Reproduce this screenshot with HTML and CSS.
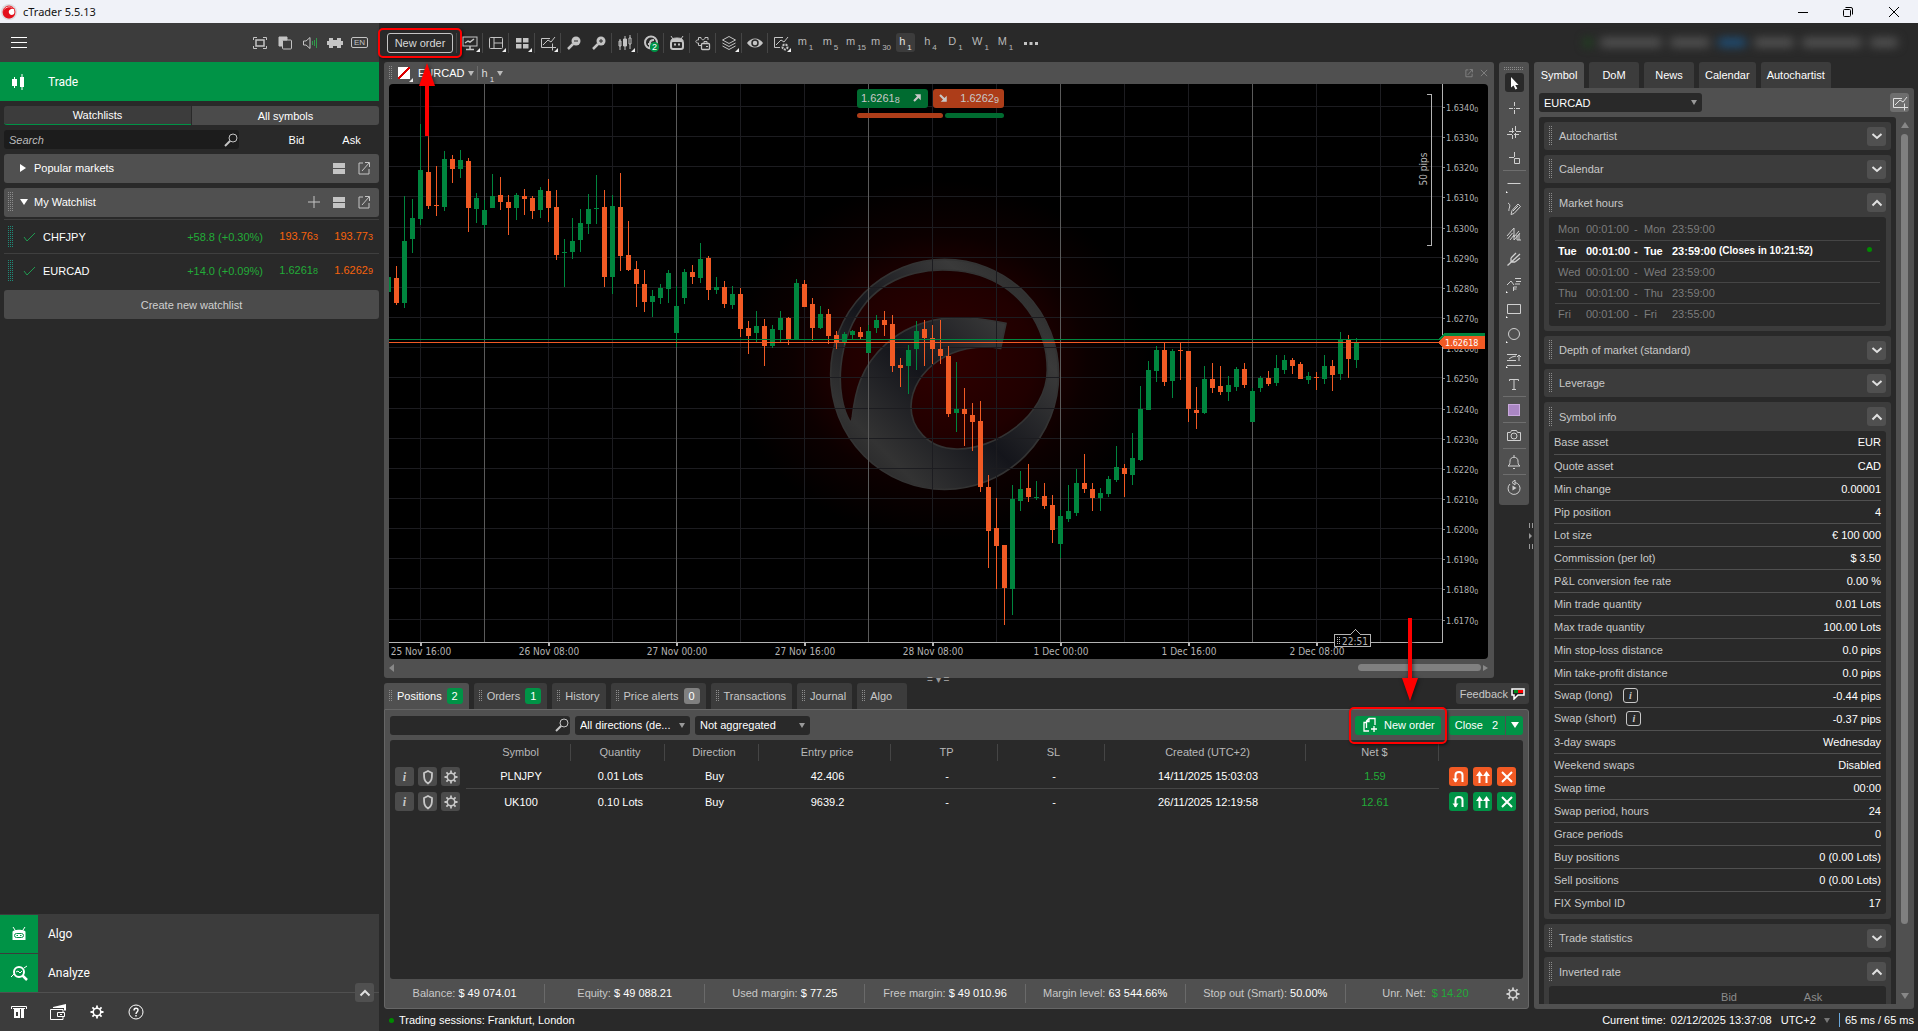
FILE: index.html
```html
<!DOCTYPE html>
<html lang="en">
<head>
  <meta charset="UTF-8">
  <meta name="viewport" content="width=device-width, initial-scale=1.0">
  <title>cTrader 5.5.13</title>
  <link rel="stylesheet" href="styles.css">
</head>
<body>
  <!-- icon sprite -->
  <svg class="sprite" aria-hidden="true">
    <symbol id="i-search" viewBox="0 0 16 16"><circle cx="10" cy="6" r="4"/><path d="M7 9l-5 5" stroke-width="2"/></symbol>
    <symbol id="i-rows" viewBox="0 0 16 16"><path d="M2 3h12v5H2zM2 9h12v5H2z" fill="currentColor" stroke="none"/></symbol>
    <symbol id="i-popout" viewBox="0 0 16 16"><path d="M7 3H3v11h10V9M9 2.500h4.500V7M13 3L6 11"/></symbol>
    <symbol id="i-plus" viewBox="0 0 16 16"><path d="M8 2v12M2 8h12"/></symbol>
    <symbol id="i-check" viewBox="0 0 16 16"><path d="M3 8l3 4 8-8"/></symbol>
    <symbol id="i-full" viewBox="0 0 16 16"><path d="M1.500 5V2.500H5M11 2.500h3.500V5M14.500 11v2.500H11M5 13.500H1.500V11"/><path d="M4 5h8v6H4z" stroke-width="1.500"/></symbol>
    <symbol id="i-copy" viewBox="0 0 16 16"><path d="M2 2h8v3H5v6H2z" fill="currentColor"/><rect x="5.500" y="5" width="9" height="9" rx="1"/></symbol>
    <symbol id="i-sound" viewBox="0 0 16 16"><path d="M1.500 6H4l4-3.500v11L4 10H1.500z"/><path d="M10.500 6v4M12.500 5v6M14.500 3v10" stroke="#2f9a4a"/></symbol>
    <symbol id="i-puzzle" viewBox="0 0 16 16"><path d="M2 3h4v2h4V3h4v3h2v4h-2v3h-4v-2H6v2H2v-3H0V6h2z" fill="currentColor" stroke="none"/></symbol>
    <symbol id="i-candles" viewBox="0 0 16 16"><path d="M4.500 3v11M12 0v16"/><path d="M2 5h5v7H2zM10 3h4v10h-4z" fill="currentColor" stroke="none"/></symbol>
    <symbol id="i-monitor" viewBox="0 0 16 16"><rect x="1" y="2" width="14" height="9"/><path d="M3 8l3-2 2 1 4-3M4 14.500h8M8 11v3" stroke-width="1.500"/></symbol>
    <symbol id="i-layout" viewBox="0 0 16 16"><rect x="1.500" y="2.500" width="13" height="11" rx="1"/><path d="M6 3v10M6 8h8"/></symbol>
    <symbol id="i-grid" viewBox="0 0 16 16"><path d="M2 3h5.500v4.500H2zM9 3h5.500v4.500H9zM2 9h5.500v4.500H2zM9 9h5.500v4.500H9z" fill="currentColor" stroke="none"/></symbol>
    <symbol id="i-chartadd" viewBox="0 0 16 16"><path d="M10 3.500H1.500v9H9M15 2l-4 5-3-2-5 5M12.500 8.500v7M9 12.500h7"/></symbol>
    <symbol id="i-zoomout" viewBox="0 0 16 16"><circle cx="10" cy="6" r="4.500" fill="currentColor" stroke="none"/><path d="M7 9l-5 5" stroke-width="2.500"/><path d="M8 6h4" stroke="#292929"/></symbol>
    <symbol id="i-zoomin" viewBox="0 0 16 16"><circle cx="10" cy="6" r="4.500" fill="currentColor" stroke="none"/><path d="M7 9l-5 5" stroke-width="2.500"/><path d="M8 6h4M10 4v4" stroke="#292929"/></symbol>
    <symbol id="i-bars" viewBox="0 0 16 16"><path d="M3 4v11M8 1v14M13 0v3M13 9v5"/><path d="M2 6h2v5H2zM12 3h2v6h-2z"/><path d="M6.500 4h3v7h-3z" fill="currentColor"/></symbol>
    <symbol id="i-social" viewBox="0 0 16 16"><circle cx="8" cy="7.500" r="6" stroke-width="2"/><path d="M7 14V8c0-3 3-3 4-3M5 9h5" stroke-width="2"/></symbol>
    <symbol id="i-robot" viewBox="0 0 16 16"><path d="M2 1l2 3M14 1l-2 3"/><path d="M2 6c0-2 2-3 6-3s6 1 6 3z" fill="currentColor"/><rect x="2" y="6" width="12" height="8" rx="2" stroke-width="2"/><path d="M5 9.500h2M9 9.500h2" stroke-width="2"/></symbol>
    <symbol id="i-robotfill" viewBox="0 0 16 16"><path d="M2 1l2 3M14 1l-2 3"/><path d="M1.500 6c0-3 13-3 13 0v8h-13z" fill="currentColor" stroke="none"/><rect x="3.500" y="7.500" width="9" height="4" rx="2" stroke="#009346"/><path d="M5.500 9.500h1.500M9 9.500h1.500" stroke="#009346"/></symbol>
    <symbol id="i-plugin" viewBox="0 0 16 16"><path d="M6 10.500H3.500V8C0 8.500 0 4.500 3.500 5V2.500H6c0 3 4 3 4 0h3V5"/><rect x="6.500" y="8.500" width="8" height="6" rx="1" stroke-width="1.300"/><path d="M9 8V6.500h3V8M11 11.500h2"/></symbol>
    <symbol id="i-layers" viewBox="0 0 16 16"><path d="M8 1.500l6.500 3.500L8 8.500 1.500 5zM1.500 8L8 11.500 14.500 8M1.500 11L8 14.500l6.500-3.500"/></symbol>
    <symbol id="i-eye" viewBox="0 0 16 16"><path d="M0 8c4-6 12-6 16 0-4 6-12 6-16 0z" fill="currentColor" stroke="none"/><circle cx="8" cy="8" r="3" fill="none" stroke="#292929" stroke-width="1.500"/></symbol>
    <symbol id="i-chartgear" viewBox="0 0 16 16"><path d="M10 2.500H1.500v10H7M15 2l-4 5-3-2-5 5"/><circle cx="12" cy="12" r="2.500" stroke-width="2" stroke-dasharray="2 1"/></symbol>
    <symbol id="i-dots" viewBox="0 0 16 16"><path d="M1 7h3v3H1zM6.500 7h3v3h-3zM12 7h3v3h-3z" fill="currentColor" stroke="none"/></symbol>
    <symbol id="i-close" viewBox="0 0 16 16"><path d="M3 3l10 10M13 3L3 13"/></symbol>
    <symbol id="i-gear" viewBox="0 0 16 16"><circle cx="8" cy="8" r="3.800" stroke-width="1.600"/><path d="M8 1.500v2.500M8 12v2.500M1.500 8H4M12 8h2.500M3.400 3.400l1.800 1.800M10.800 10.800l1.800 1.800M12.600 3.400l-1.800 1.800M5.200 10.800l-1.800 1.800" stroke-width="1.800"/></symbol>
    <symbol id="i-shield" viewBox="0 0 16 16"><path d="M8 2l4 2c0 5 0 8-4 10.500C4 12 4 9 4 4z" stroke-width="1.800"/></symbol>
    <symbol id="i-up" viewBox="0 0 16 16"><path d="M3.500 10.500L8 6l4.500 4.500" stroke-width="2"/></symbol>
    <symbol id="i-down" viewBox="0 0 16 16"><path d="M3.500 6L8 10l4.500-4" stroke-width="2"/></symbol>
    <symbol id="i-reverse" viewBox="0 0 16 16"><path d="M4.500 13V6c0-4 7-4 7 0v7" stroke-width="2"/><path d="M1.500 9.500h6l-3 4z" fill="currentColor" stroke="none"/></symbol>
    <symbol id="i-double" viewBox="0 0 16 16"><path d="M4.500 14V5M11.500 14V5" stroke-width="2"/><path d="M1 7l3.500-5L8 7zM8 7l3.500-5L15 7z" fill="currentColor" stroke="none"/></symbol>
    <symbol id="i-doc" viewBox="0 0 16 16"><path d="M7 14H2V5.500h2.500M4.500 5V4L7 1.500h6V8M12 9v6M9 12h6M4.500 5v6M7 1.500v3H4.500" stroke-width="1.300"/></symbol>
    <symbol id="i-cursor" viewBox="0 0 16 16"><path d="M5 2v10.500l2.500-2 2 4 1.800-1-2-3.500H12.500z" fill="currentColor" stroke="none"/></symbol>
    <symbol id="i-cross" viewBox="0 0 16 16"><path d="M8.500 2v4M8.500 10v4M3 8.500h4M10 8.500h4M8 8.500h1"/></symbol>
    <symbol id="i-cross2" viewBox="0 0 16 16"><path d="M6.500 3v5M6.500 10v4M9.500 1v5M9.500 8v5M1 9.500h5M8 9.500h5M3 6.500h5M10 6.500h5"/></symbol>
    <symbol id="i-crossbox" viewBox="0 0 16 16"><path d="M8.500 2v5M3 7.500h5"/><path d="M8.500 8.500h5v5h-5z"/></symbol>
    <symbol id="i-line" viewBox="0 0 16 16"><path d="M1.500 7.500h13"/></symbol>
    <symbol id="i-pencil" viewBox="0 0 16 16"><path d="M2 2c4 2 0 6 1 8M5 13.500l1-4 6-6.500 2.500 2.500L8 12.500zM7 10l5-5"/></symbol>
    <symbol id="i-channel" viewBox="0 0 16 16"><path d="M1 10l7-8v9l5-6M4 14l4-5v5l6-7M1.500 13l5-6M11 9v5h4M13 8v6"/></symbol>
    <symbol id="i-fork" viewBox="0 0 16 16"><path d="M1.500 14.500L14 3M5 7v4h4M5 7l5-5M9 11l5-4" stroke-width="1.300"/></symbol>
    <symbol id="i-pattern" viewBox="0 0 16 16"><path d="M1 9l4-4 3 4M9 2.500h6M10 5.500h5M9 8h5M7.500 15v-4H11M7.500 13h3"/></symbol>
    <symbol id="i-rect" viewBox="0 0 16 16"><path d="M1.500 3.500h13v9h-13z"/></symbol>
    <symbol id="i-circle" viewBox="0 0 16 16"><circle cx="8" cy="8" r="5.500"/></symbol>
    <symbol id="i-risk" viewBox="0 0 16 16"><path d="M1 3.500h10M1 9.500h9M1 14.500h14M3 8l3-2 4-1M13 10V4M11 6l2-2 2 2"/></symbol>
    <symbol id="i-text" viewBox="0 0 16 16"><path d="M3.500 5V3.500h9V5M8 3v11M6 13.500h4"/></symbol>
    <symbol id="i-camera" viewBox="0 0 16 16"><path d="M1.500 4.500h3l1-2h5l1 2h3v8h-13z"/><circle cx="8" cy="8" r="3"/></symbol>
    <symbol id="i-bell" viewBox="0 0 16 16"><path d="M2 12c2-1 2-3 2-5 0-5 8-5 8 0 0 2 0 4 2 5zM7 14.500h2M8 1v2"/></symbol>
    <symbol id="i-replay" viewBox="0 0 16 16"><path d="M9 2.500a6 6 0 1 1-5 1.500M9 0v5L6 2.500z"/><path d="M6.500 5.500v5l4-2.500z" fill="currentColor" stroke="none"/></symbol>
    <symbol id="i-analyze" viewBox="0 0 18 16"><circle cx="9" cy="7" r="5" stroke-width="2"/><path d="M12.500 10.500L17 15" stroke-width="2.500"/><path d="M1 12l3-3M14 3l3-2M6 7l2-1 2 2 2-2"/></symbol>
    <symbol id="i-atm" viewBox="0 0 16 16"><path d="M.5 5V2.500h15V5M2 4.500h12"/><path d="M3 5h6v9H3zM10 5h3v9h-3z" fill="currentColor" stroke="none"/><path d="M5 8h2v4H5z" fill="#3c3c3c" stroke="none"/></symbol>
    <symbol id="i-wallet" viewBox="0 0 16 16"><path d="M13 9V5.500H.5v10H13V13M7.500 8.500h7v4h-7zM10 10.500h2"/><path d="M3 3l13-3v6.500h-2V4H3z" fill="currentColor" stroke="none"/></symbol>
    <symbol id="i-help" viewBox="0 0 16 16"><circle cx="8" cy="8" r="7"/><path d="M6 6.500c0-3 4-3 4-.5C10 8 8 8 8 10M8 11v1.500" stroke-width="1.400"/></symbol>
  </svg>

  <header class="titlebar">
    <svg class="logo" viewBox="0 0 16 16"><circle cx="8" cy="8" r="8" fill="#d9dadd"/><circle cx="8" cy="8" r="6.500" fill="#fff"/><path d="M2 9c0-6 8-7 12-4-4-1-7 1-6 4s5 2 6 0c0 7-12 7-12 0z" fill="#e3101c"/><circle cx="8" cy="8" r="6" fill="none" stroke="#e3101c"/></svg>
    <span class="title">cTrader 5.5.13</span>
    <div class="window-buttons">
      <button aria-label="Minimize"><svg viewBox="0 0 10 10"><path d="M0 5.500h10"/></svg></button>
      <button aria-label="Restore"><svg viewBox="0 0 10 10"><rect x=".5" y="2.500" width="7" height="7" rx="1"/><path d="M2.500 .5H8q1.500 0 1.500 1.500v5.500"/></svg></button>
      <button aria-label="Close"><svg viewBox="0 0 10 10"><path d="M0 0l10 10M10 0L0 10"/></svg></button>
    </div>
  </header>

  <div class="app">
    <aside class="sidebar">
      <div class="sidebar-head">
        <button class="menu" aria-label="Menu"><span></span><span></span><span></span></button>
        <button class="tool" aria-label="Full screen"><svg class="icon"><use href="#i-full"/></svg></button>
        <button class="tool" aria-label="Detached windows"><svg class="icon"><use href="#i-copy"/></svg></button>
        <button class="tool" aria-label="Sound"><svg class="icon"><use href="#i-sound"/></svg></button>
        <button class="tool" aria-label="Plugins"><svg class="icon"><use href="#i-puzzle"/></svg></button>
        <button class="tool"><span class="lang">EN</span></button>
      </div>
      <a href="#" class="app-link active"><svg class="icon"><use href="#i-candles"/></svg><span>Trade</span></a>

      <div class="watch">
        <div class="watch-tabs">
          <button class="active">Watchlists</button>
          <button>All symbols</button>
        </div>
        <div class="watch-search">
          <div class="search-box">
            <input type="text" placeholder="Search" aria-label="Search">
            <svg class="icon"><use href="#i-search"/></svg>
          </div>
          <span>Bid</span>
          <span>Ask</span>
        </div>
        <div class="group">
          <span class="tri-right"></span>
          <span class="group-name">Popular markets</span>
          <button class="tool" aria-label="View"><svg class="icon"><use href="#i-rows"/></svg></button>
          <button class="tool" aria-label="Detach"><svg class="icon"><use href="#i-popout"/></svg></button>
        </div>
        <div class="group open">
          <span class="grip"></span>
          <span class="tri-down"></span>
          <span class="group-name">My Watchlist</span>
          <button class="tool" aria-label="Add symbol"><svg class="icon"><use href="#i-plus"/></svg></button>
          <button class="tool" aria-label="View"><svg class="icon"><use href="#i-rows"/></svg></button>
          <button class="tool" aria-label="Detach"><svg class="icon"><use href="#i-popout"/></svg></button>
        </div>
        <div class="quote">
          <span class="grip teal"></span>
          <svg class="icon check"><use href="#i-check"/></svg>
          <span class="quote-name">CHFJPY</span>
          <span class="change up">+58.8 (+0.30%)</span>
          <span class="price down">193.76<small>3</small></span>
          <span class="price down">193.77<small>3</small></span>
        </div>
        <div class="quote">
          <span class="grip teal"></span>
          <svg class="icon check"><use href="#i-check"/></svg>
          <span class="quote-name">EURCAD</span>
          <span class="change up">+14.0 (+0.09%)</span>
          <span class="price up">1.6261<small>8</small></span>
          <span class="price down">1.6262<small>9</small></span>
        </div>
        <button class="create">Create new watchlist</button>
      </div>

      <nav class="apps">
        <a href="#" class="app-link"><span class="app-icon"><svg class="icon"><use href="#i-robotfill"/></svg></span><span>Algo</span></a>
        <a href="#" class="app-link"><span class="app-icon"><svg class="icon wide"><use href="#i-analyze"/></svg></span><span>Analyze</span></a>
        <button class="square collapse" aria-label="Collapse"><svg class="icon"><use href="#i-up"/></svg></button>
      </nav>
      <div class="sidebar-foot">
        <button aria-label="Deposit"><svg class="icon"><use href="#i-atm"/></svg></button>
        <button aria-label="Wallet"><svg class="icon"><use href="#i-wallet"/></svg></button>
        <button aria-label="Settings"><svg class="icon"><use href="#i-gear"/></svg></button>
        <button aria-label="Help"><svg class="icon"><use href="#i-help"/></svg></button>
      </div>
    </aside>

    <div class="main">
      <div class="toolbar">
        <div class="callout callout-top">
          <button class="new-order-outline">New order</button>
          <svg class="arrow" viewBox="0 0 20 74"><path d="M8 74V24H2L10 1l8 23h-6v50z" fill="#f00"/></svg>
        </div>
        <button class="tool split corner" aria-label="Workspace"><svg class="icon"><use href="#i-monitor"/></svg></button>
        <button class="tool split corner" aria-label="Layout"><svg class="icon"><use href="#i-layout"/></svg></button>
        <button class="tool split corner" aria-label="Chart mode"><svg class="icon"><use href="#i-grid"/></svg></button>
        <button class="tool split corner" aria-label="New chart"><svg class="icon"><use href="#i-chartadd"/></svg></button>
        <button class="tool split" aria-label="Zoom out"><svg class="icon"><use href="#i-zoomout"/></svg></button>
        <button class="tool" aria-label="Zoom in"><svg class="icon"><use href="#i-zoomin"/></svg></button>
        <button class="tool split corner" aria-label="Chart type"><svg class="icon"><use href="#i-bars"/></svg></button>
        <button class="tool split" aria-label="Copy"><svg class="icon"><use href="#i-social"/></svg><span class="count">2</span></button>
        <button class="tool split" aria-label="cBots"><svg class="icon"><use href="#i-robot"/></svg></button>
        <button class="tool split" aria-label="Plugins"><svg class="icon"><use href="#i-plugin"/></svg></button>
        <button class="tool split corner" aria-label="Layers"><svg class="icon"><use href="#i-layers"/></svg></button>
        <button class="tool split" aria-label="View options"><svg class="icon"><use href="#i-eye"/></svg></button>
        <button class="tool split corner" aria-label="Chart settings"><svg class="icon"><use href="#i-chartgear"/></svg></button>
        <button class="tf">m<sub>1</sub></button>
        <button class="tf">m<sub>5</sub></button>
        <button class="tf">m<sub>15</sub></button>
        <button class="tf">m<sub>30</sub></button>
        <button class="tf active">h<sub>1</sub></button>
        <button class="tf">h<sub>4</sub></button>
        <button class="tf">D<sub>1</sub></button>
        <button class="tf">W<sub>1</sub></button>
        <button class="tf">M<sub>1</sub></button>
        <button class="tool" aria-label="More"><svg class="icon"><use href="#i-dots"/></svg></button>
        <div class="account" aria-hidden="true"><i></i><b></b><b></b><em></em><b></b><b></b><b></b></div>
      </div>

      <div class="workspace">
        <div class="center">
          <div class="chart-row">
            <section class="chart-panel">
              <div class="chart-head">
                <span class="grip"></span>
                <span class="swatch corner"></span>
                <button>EURCAD <span class="caret"></span></button>
                <button class="period">h<sub>1</sub> <span class="caret"></span></button>
                <button class="mini push" aria-label="Detach"><svg class="icon"><use href="#i-popout"/></svg></button>
                <button class="mini" aria-label="Close chart"><svg class="icon"><use href="#i-close"/></svg></button>
              </div>
              <div class="chart-body">
                <svg id="chart" viewBox="389 84 1099 575" preserveAspectRatio="xMaxYMin slice">
                  <defs>
                    <radialGradient id="glow"><stop offset="0" stop-color="#300000"/><stop offset=".45" stop-color="#200000"/><stop offset=".7" stop-color="#0c0000"/><stop offset="1" stop-color="#000"/></radialGradient>
                    <linearGradient id="metal" x1="0" y1="1" x2="1" y2="0"><stop offset="0" stop-color="#1c1c1e"/><stop offset=".2" stop-color="#333"/><stop offset=".45" stop-color="#14151b"/><stop offset=".75" stop-color="#3a3a3a"/><stop offset="1" stop-color="#222"/></linearGradient>
                  </defs>
                  <ellipse cx="940" cy="360" rx="210" ry="180" fill="url(#glow)"/>
                  <g transform="translate(760 230) scale(.3333)">
                    <path fill-rule="evenodd" fill="url(#metal)" stroke="#333" stroke-width="5" d="M212 433a342 345 0 1 0 684 0a342 345 0 1 0-684 0zM270 575C225 500 225 330 320 215C400 125 520 105 640 130C780 165 862 290 862 420C862 560 700 660 590 657C500 655 453 590 453 530C455 420 580 330 722 355L738 280C600 250 480 255 380 340C300 410 285 490 277 560Q274 580 270 575z"/>
                  </g>
                  <g id="plot"></g>
                  <path class="pips" d="M1427 94.500h4.500v151H1427"/>
                  <text class="pips-label" transform="translate(1427 169) rotate(-90)">50 pips</text>
                  <path d="M1439 338.500l5-5.500h41v10h-41z" fill="#00853e"/>
                  <path d="M1438 342.500l6-6.500h41v13h-41z" fill="#f15a24"/>
                  <text class="tag" x="1445" y="346">1.62618</text>
                  <path class="timer" d="M1334.500 634.500h16l5-5 5 5h10v12h-36z"/>
                  <path class="timer-grip" d="M1337.500 637v8M1339.500 637v8"/>
                  <text class="timer-label" x="1342" y="645">22:51</text>
                </svg>
                <div class="quick">
                  <button class="buy">1.6261<small>8</small><svg class="icon" viewBox="0 0 16 16"><path d="M5 3h8v8l-3-3-5 5-2-2 5-5z" fill="currentColor" stroke="none"/></svg></button>
                  <button class="sell"><svg class="icon" viewBox="0 0 16 16"><path d="M13 13H5l3-3-5-5 2-2 5 5 3-3z" fill="currentColor" stroke="none"/></svg>1.6262<small>9</small></button>
                  <div class="depth"><span class="depth-sell"></span><span class="depth-buy"></span></div>
                </div>
              </div>
              <div class="chart-scroll"><span class="tri-left"></span><span class="thumb"></span><span class="tri-right"></span></div>
              <span class="splitter-h">= ▾ =</span>
            </section>

            <div class="rail">
              <span class="grip flat"></span>
              <button class="active" aria-label="Pointer"><svg class="icon"><use href="#i-cursor"/></svg></button>
              <button aria-label="Crosshair"><svg class="icon"><use href="#i-cross"/></svg></button>
              <button aria-label="Synced crosshair"><svg class="icon"><use href="#i-cross2"/></svg></button>
              <button class="end" aria-label="Market snap"><svg class="icon"><use href="#i-crossbox"/></svg></button>
              <button class="mark" aria-label="Lines"><svg class="icon"><use href="#i-line"/></svg></button>
              <button aria-label="Pencil"><svg class="icon"><use href="#i-pencil"/></svg></button>
              <button aria-label="Channel"><svg class="icon"><use href="#i-channel"/></svg></button>
              <button aria-label="Pitchfork"><svg class="icon"><use href="#i-fork"/></svg></button>
              <button class="mark" aria-label="Fibonacci"><svg class="icon"><use href="#i-pattern"/></svg></button>
              <button class="mark" aria-label="Rectangle"><svg class="icon"><use href="#i-rect"/></svg></button>
              <button class="mark" aria-label="Ellipse"><svg class="icon"><use href="#i-circle"/></svg></button>
              <button class="mark" aria-label="Risk reward"><svg class="icon"><use href="#i-risk"/></svg></button>
              <button class="end" aria-label="Text"><svg class="icon"><use href="#i-text"/></svg></button>
              <button class="end" aria-label="Colour"><span class="color"></span></button>
              <button class="end" aria-label="Snapshot"><svg class="icon"><use href="#i-camera"/></svg></button>
              <button class="end" aria-label="Alert"><svg class="icon"><use href="#i-bell"/></svg></button>
              <button aria-label="Replay"><svg class="icon"><use href="#i-replay"/></svg></button>
            </div>
          </div>

          <section class="trade-watch">
            <div class="tw-tabs">
              <button class="active"><span class="grip"></span>Positions<span class="badge">2</span></button>
              <button><span class="grip"></span>Orders<span class="badge">1</span></button>
              <button><span class="grip"></span>History</button>
              <button><span class="grip"></span>Price alerts<span class="badge gray">0</span></button>
              <button><span class="grip"></span>Transactions</button>
              <button><span class="grip"></span>Journal</button>
              <button><span class="grip"></span>Algo</button>
              <a href="#" class="feedback">Feedback <svg viewBox="0 0 14 12"><path d="M1 1h12v6H7l-4 4V7H1z" fill="#222" stroke="#fff" stroke-width="1.500"/><path d="M3 2h4v3H3z" fill="#008a1e"/><path d="M7 2h5v3H7z" fill="#f00"/></svg></a>
            </div>
            <div class="tw-panel">
              <div class="filters">
                <div class="search-box"><input type="text" aria-label="Filter positions"><svg class="icon"><use href="#i-search"/></svg></div>
                <div class="select"><select aria-label="Direction"><option>All directions (de...</option></select></div>
                <div class="select"><select aria-label="Aggregation"><option>Not aggregated</option></select></div>
                <div class="callout callout-bottom">
                  <button class="green new-order"><svg class="icon"><use href="#i-doc"/></svg>New order</button>
                  <svg class="arrow" viewBox="0 0 20 84"><path d="M8 0v60H2l8 23 8-23h-6V0z" fill="#f00"/></svg>
                </div>
                <div class="close-all"><button class="green">Close<span>2</span></button><button class="green drop" aria-label="Close options"></button></div>
              </div>
              <div class="positions">
                <table>
                  <colgroup><col class="c-tools"><col class="c-symbol"><col class="c-qty"><col class="c-dir"><col class="c-entry"><col class="c-tp"><col class="c-sl"><col class="c-created"><col class="c-net"><col class="c-actions"></colgroup>
                  <thead>
                    <tr><td></td><th><span>Symbol</span></th><th><span>Quantity</span></th><th><span>Direction</span></th><th><span>Entry price</span></th><th><span>TP</span></th><th><span>SL</span></th><th><span>Created (UTC+2)</span></th><th><span>Net $</span></th><td></td></tr>
                  </thead>
                  <tbody>
                    <tr>
                      <td><div class="row-tools"><button class="info">i</button><button aria-label="Protection"><svg class="icon"><use href="#i-shield"/></svg></button><button aria-label="Modify"><svg class="icon"><use href="#i-gear"/></svg></button></div></td>
                      <td>PLNJPY</td><td>0.01 Lots</td><td>Buy</td><td>42.406</td><td>-</td><td>-</td><td>14/11/2025 15:03:03</td><td class="up">1.59</td>
                      <td><div class="row-actions orange"><button aria-label="Reverse"><svg class="icon"><use href="#i-reverse"/></svg></button><button aria-label="Double"><svg class="icon"><use href="#i-double"/></svg></button><button aria-label="Close"><svg class="icon bold"><use href="#i-close"/></svg></button></div></td>
                    </tr>
                    <tr>
                      <td><div class="row-tools"><button class="info">i</button><button aria-label="Protection"><svg class="icon"><use href="#i-shield"/></svg></button><button aria-label="Modify"><svg class="icon"><use href="#i-gear"/></svg></button></div></td>
                      <td>UK100</td><td>0.10 Lots</td><td>Buy</td><td>9639.2</td><td>-</td><td>-</td><td>26/11/2025 12:19:58</td><td class="up">12.61</td>
                      <td><div class="row-actions"><button aria-label="Reverse"><svg class="icon"><use href="#i-reverse"/></svg></button><button aria-label="Double"><svg class="icon"><use href="#i-double"/></svg></button><button aria-label="Close"><svg class="icon bold"><use href="#i-close"/></svg></button></div></td>
                    </tr>
                  </tbody>
                </table>
              </div>
              <div class="summary">
                <span>Balance: <b>$ 49 074.01</b></span>
                <span>Equity: <b>$ 49 088.21</b></span>
                <span>Used margin: <b>$ 77.25</b></span>
                <span>Free margin: <b>$ 49 010.96</b></span>
                <span>Margin level: <b>63 544.66%</b></span>
                <span>Stop out (Smart): <b>50.00%</b></span>
                <span>Unr. Net: &nbsp;<b class="up">$ 14.20</b></span>
                <button aria-label="Settings"><svg class="icon"><use href="#i-gear"/></svg></button>
              </div>
            </div>
          </section>
        </div>

        <aside class="symbol-panel">
          <span class="splitter-v"><i></i><b></b><i></i></span>
          <div class="sp-tabs">
            <button class="active">Symbol</button>
            <button>DoM</button>
            <button>News</button>
            <button>Calendar</button>
            <button>Autochartist</button>
          </div>
          <div class="sp-body">
            <div class="sp-head">
              <div class="select"><select aria-label="Symbol"><option>EURCAD</option></select></div>
              <button class="square light" aria-label="New chart"><svg class="icon"><use href="#i-chartadd"/></svg></button>
            </div>
            <div class="sp-scroll">
              <div class="cards">
                <section class="card"><h2><span class="grip"></span>Autochartist<button class="square" aria-label="Expand"><svg class="icon"><use href="#i-down"/></svg></button></h2></section>
                <section class="card"><h2><span class="grip"></span>Calendar<button class="square" aria-label="Expand"><svg class="icon"><use href="#i-down"/></svg></button></h2></section>
                <section class="card open">
                  <h2><span class="grip"></span>Market hours<button class="square" aria-label="Collapse"><svg class="icon"><use href="#i-up"/></svg></button></h2>
                  <div class="card-body hours">
                    <table>
                      <tr><td>Mon</td><td>00:01:00</td><td>-</td><td>Mon</td><td>23:59:00</td><td></td></tr>
                      <tr class="now"><td>Tue</td><td>00:01:00</td><td>-</td><td>Tue</td><td>23:59:00</td><td><small>(Closes in 10:21:52)</small><i class="dot"></i></td></tr>
                      <tr><td>Wed</td><td>00:01:00</td><td>-</td><td>Wed</td><td>23:59:00</td><td></td></tr>
                      <tr><td>Thu</td><td>00:01:00</td><td>-</td><td>Thu</td><td>23:59:00</td><td></td></tr>
                      <tr><td>Fri</td><td>00:01:00</td><td>-</td><td>Fri</td><td>23:55:00</td><td></td></tr>
                    </table>
                  </div>
                </section>
                <section class="card"><h2><span class="grip"></span>Depth of market (standard)<button class="square" aria-label="Expand"><svg class="icon"><use href="#i-down"/></svg></button></h2></section>
                <section class="card"><h2><span class="grip"></span>Leverage<button class="square" aria-label="Expand"><svg class="icon"><use href="#i-down"/></svg></button></h2></section>
                <section class="card open">
                  <h2><span class="grip"></span>Symbol info<button class="square" aria-label="Collapse"><svg class="icon"><use href="#i-up"/></svg></button></h2>
                  <div class="card-body info-list">
                    <table>
                      <tr><th>Base asset</th><td>EUR</td></tr>
                      <tr><th>Quote asset</th><td>CAD</td></tr>
                      <tr><th>Min change</th><td>0.00001</td></tr>
                      <tr><th>Pip position</th><td>4</td></tr>
                      <tr><th>Lot size</th><td>€ 100 000</td></tr>
                      <tr><th>Commission (per lot)</th><td>$ 3.50</td></tr>
                      <tr><th>P&amp;L conversion fee rate</th><td>0.00 %</td></tr>
                      <tr><th>Min trade quantity</th><td>0.01 Lots</td></tr>
                      <tr><th>Max trade quantity</th><td>100.00 Lots</td></tr>
                      <tr><th>Min stop-loss distance</th><td>0.0 pips</td></tr>
                      <tr><th>Min take-profit distance</th><td>0.0 pips</td></tr>
                      <tr><th>Swap (long) <button class="hint">i</button></th><td>-0.44 pips</td></tr>
                      <tr><th>Swap (short) <button class="hint">i</button></th><td>-0.37 pips</td></tr>
                      <tr><th>3-day swaps</th><td>Wednesday</td></tr>
                      <tr><th>Weekend swaps</th><td>Disabled</td></tr>
                      <tr><th>Swap time</th><td>00:00</td></tr>
                      <tr><th>Swap period, hours</th><td>24</td></tr>
                      <tr><th>Grace periods</th><td>0</td></tr>
                      <tr><th>Buy positions</th><td>0 (0.00 Lots)</td></tr>
                      <tr><th>Sell positions</th><td>0 (0.00 Lots)</td></tr>
                      <tr><th>FIX Symbol ID</th><td>17</td></tr>
                    </table>
                  </div>
                </section>
                <section class="card"><h2><span class="grip"></span>Trade statistics<button class="square" aria-label="Expand"><svg class="icon"><use href="#i-down"/></svg></button></h2></section>
                <section class="card open">
                  <h2><span class="grip"></span>Inverted rate<button class="square" aria-label="Collapse"><svg class="icon"><use href="#i-up"/></svg></button></h2>
                  <div class="card-body inverted"><span></span><span>Bid</span><span>Ask</span></div>
                </section>
              </div>
              <div class="scrollbar"><span class="tri-up"></span><span class="thumb"></span><span class="tri-down"></span></div>
            </div>
          </div>
        </aside>
      </div>

      <footer class="status">
        <i class="dot"></i>
        <span>Trading sessions: Frankfurt, London</span>
        <span class="clock">Current time: <span>02/12/2025 13:37:08</span></span>
        <button class="zone">UTC+2 <span class="caret"></span></button>
        <span class="ping">65 ms / 65 ms</span>
      </footer>
    </div>
  </div>
  <script src="chart.js"></script>
</body>
</html>
```

FILE: styles.css
```css
* {
  box-sizing: border-box;
}

body {
  margin: 0;
  height: 100vh;
  display: flex;
  flex-direction: column;
  overflow: hidden;
  background: #292929;
  color: #fff;
  font: 11px/14px "Liberation Sans", Arial, sans-serif;
}

button,
input,
select {
  font: inherit;
  color: inherit;
  background: none;
  border: 0;
  margin: 0;
  padding: 0;
}

a {
  color: inherit;
  text-decoration: none;
}

table {
  width: 100%;
  border-collapse: collapse;
}

th {
  font-weight: normal;
}

td,
th {
  padding: 0;
}

.sprite {
  display: none;
}

.icon {
  width: 16px;
  height: 16px;
  flex: none;
  fill: none;
  stroke: currentColor;
  display: block;
}

.icon.wide {
  width: 18px;
}

.icon.bold {
  stroke-width: 2;
}

.up {
  color: #22ac38;
}

.down {
  color: #f7630c;
}

.grip {
  width: 5px;
  height: 20px;
  flex: none;
  background: conic-gradient(from 270deg at 1px 1px, #8c8c8c 90deg, transparent 0) 0 0 / 2px 2px;
}

.grip.teal {
  background: conic-gradient(from 270deg at 1px 1px, #1f8a78 90deg, transparent 0) 0 0 / 2px 2px;
}

.grip.flat {
  width: 20px;
  height: 3px;
}

.caret,
.tri-down {
  display: inline-block;
  border: 3px solid transparent;
  border-top: 5px solid #bbb;
  border-bottom: 0;
}

.tri-up {
  border: 4px solid transparent;
  border-bottom: 6px solid #888;
  border-top: 0;
}

.tri-right {
  border: 3px solid transparent;
  border-left: 5px solid #fff;
  border-right: 0;
}

.tri-left {
  border: 4px solid transparent;
  border-right: 5px solid #888;
  border-left: 0;
}

.dot {
  width: 5px;
  height: 5px;
  border-radius: 50%;
  background: #008a00;
}

.tool {
  width: 25px;
  height: 20px;
  color: #c4c4c4;
  display: flex;
  align-items: center;
  justify-content: center;
  position: relative;
}

.square {
  width: 19px;
  height: 19px;
  border-radius: 3px;
  background: #505050;
  color: #e0e0e0;
  display: flex;
  align-items: center;
  justify-content: center;
}

.square.light {
  background: #6e6e6e;
}

.corner {
  position: relative;
}

.corner::after {
  content: "";
  position: absolute;
  right: 2px;
  bottom: 1px;
  border: 2px solid transparent;
  border-right-color: #eee;
  border-bottom-color: #eee;
}

/* Title bar */
.titlebar {
  height: 23px;
  flex: none;
  display: flex;
  align-items: center;
  background: #f0f2f8;
  color: #111;
  font: 11px/16px "Noto Sans", sans-serif;
}

.logo {
  width: 16px;
  height: 16px;
  margin: 0 6px 0 1px;
}

.window-buttons {
  margin-left: auto;
  display: flex;
}

.window-buttons button {
  width: 45px;
  height: 20px;
  display: flex;
  align-items: center;
  justify-content: center;
}

.window-buttons button:last-child {
  width: 48px;
}

.window-buttons svg {
  width: 10px;
  height: 10px;
  fill: none;
  stroke: #000;
}

.app {
  flex: 1;
  min-height: 0;
  display: grid;
  grid-template-columns: 379px 1fr;
}

/* Sidebar */
.sidebar {
  display: flex;
  flex-direction: column;
  min-height: 0;
}

.sidebar-head {
  height: 39px;
  flex: none;
  display: flex;
  align-items: center;
  padding: 0 7px 0 11px;
  background: #3c3c3c;
}

.menu {
  width: 16px;
  margin-right: auto;
  display: grid;
  gap: 4px;
}

.menu span {
  height: 1px;
  background: #fff;
}

.lang {
  border: 1px solid #c4c4c4;
  border-radius: 2px;
  padding: 0 2px;
  font-size: 8px;
  line-height: 9px;
}

.app-link {
  height: 39px;
  display: flex;
  align-items: center;
  background: #3c3c3c;
  font: 12px/16px Roboto, sans-serif;
}

.app-link.active {
  background: #009346;
  padding-left: 10px;
  gap: 22px;
}

.app-icon {
  width: 38px;
  height: 38px;
  margin-right: 10px;
  background: #009346;
  display: flex;
  align-items: center;
  justify-content: center;
}

.watch {
  flex: 1;
  padding: 5px 0 0 4px;
}

.watch-tabs {
  display: grid;
  grid-template-columns: 1fr 1fr;
  gap: 1px;
  height: 19px;
  margin-bottom: 5px;
}

.watch-tabs button {
  background: #4b4b4b;
  border-radius: 0 3px 3px 0;
}

.watch-tabs .active {
  background: #3c3c3c;
  border-bottom: 1px solid #009346;
  border-radius: 3px 0 0 3px;
}

.watch-search {
  display: grid;
  grid-template-columns: 235px 1fr 55px 55px;
  align-items: center;
  text-align: center;
  margin-bottom: 5px;
}

.watch-search span:nth-child(2) {
  grid-column: 3;
}

.search-box {
  height: 19px;
  display: flex;
  align-items: center;
  padding-left: 5px;
  border-radius: 3px;
  background: #1c1c1c;
  color: #c4c4c4;
}

.search-box input {
  flex: 1;
  min-width: 0;
  outline: none;
}

.search-box input::placeholder {
  color: #bbb;
  font-style: italic;
}

.group {
  height: 29px;
  display: flex;
  align-items: center;
  margin-bottom: 5px;
  padding: 0 3px 1px 16px;
  border-radius: 3px;
  background: #505050;
}

.group.open {
  margin-bottom: 2px;
}

.group .grip {
  margin: 0 7px 0 -12px;
}

.group .tri-down,
.group .tri-right {
  border: 4px solid transparent;
  border-top: 6px solid #fff;
  border-bottom: 0;
}

.group .tri-right {
  border: 4px solid transparent;
  border-left: 6px solid #fff;
  border-right: 0;
  margin-right: 2px;
}

.group-name {
  flex: 1;
  margin-left: 6px;
}

.quote {
  height: 34px;
  display: grid;
  grid-template-columns: 13px 22px 1fr 96px 55px 55px;
  align-items: center;
  padding: 0 6px 0 4px;
  border-top: 1px solid #3f3f3f;
}

.quote .grip {
  height: 22px;
}

.check {
  color: #1f9a50;
}

.change,
.quote .price {
  text-align: right;
}

.price small,
.quick small {
  font-size: 9px;
}

.create {
  width: 100%;
  height: 29px;
  margin-top: 3px;
  border-radius: 3px;
  background: #4b4b4b;
  color: #d0d0d0;
}

.apps {
  display: grid;
  position: relative;
  border-bottom: 1px solid #505050;
  background: #3c3c3c;
}

.collapse {
  position: absolute;
  right: 5px;
  bottom: -10px;
}

.sidebar-foot {
  height: 38px;
  display: flex;
  align-items: center;
  gap: 23px;
  padding-left: 11px;
  background: #3c3c3c;
}

/* Toolbar */
.main {
  min-width: 0;
  min-height: 0;
  display: flex;
  flex-direction: column;
}

.toolbar {
  height: 39px;
  flex: none;
  display: flex;
  align-items: center;
  padding-left: 8px;
}

.callout {
  position: relative;
}

.callout::before {
  content: "";
  position: absolute;
  border: 2px solid #f00;
  border-radius: 5px;
  box-shadow: 1px 1px 3px rgba(0, 0, 0, 0.6);
  pointer-events: none;
}

.callout-top {
  margin-right: 3px;
}

.callout-top::before {
  inset: -5px -9px;
}

.arrow {
  position: absolute;
  z-index: 5;
  width: 20px;
  filter: drop-shadow(1px 1px 2px rgba(0, 0, 0, 0.6));
}

.callout-top .arrow {
  left: 30px;
  top: 29px;
  height: 74px;
}

.callout-bottom .arrow {
  left: 45px;
  bottom: 33px;
  height: 84px;
}

.new-order-outline {
  width: 66px;
  height: 20px;
  display: block;
  border: 1px solid #c4c4c4;
  border-radius: 3px;
  color: #d8d8d8;
}

.split {
  width: 26px;
  border-left: 1px solid #454545;
}

.count {
  position: absolute;
  left: 12px;
  top: 9px;
  padding: 0 2px;
  border-radius: 6px;
  background: #009346;
  color: #fff;
  font-size: 9px;
  line-height: 10px;
}

.tf {
  width: 19px;
  height: 19px;
  margin: 0 3px;
  padding-bottom: 4px;
  border-radius: 3px;
  color: #b8b8b8;
  white-space: nowrap;
}

.tf sub,
.period sub {
  margin-left: 2px;
  font-size: 8px;
  line-height: 0;
  vertical-align: -5px;
}

.tf.active {
  background: #3c3c3c;
  color: #e4e4e4;
}

.account {
  display: flex;
  gap: 8px;
  margin: 0 20px 0 auto;
  filter: blur(5px);
}

.account i,
.account b,
.account em {
  height: 9px;
  border-radius: 4px;
  background: #555;
}

.account i {
  width: 8px;
  background: #1f4a1f;
}

.account b {
  width: 40px;
}

.account b:nth-child(2) {
  width: 62px;
}

.account em {
  width: 28px;
  background: #1f4f78;
}

.account b:nth-child(6) {
  width: 60px;
}

.account b:last-child {
  width: 28px;
}

/* Workspace */
.workspace {
  flex: 1;
  min-height: 0;
  display: flex;
  gap: 5px;
  padding: 0 4px 0 5px;
}

.center {
  flex: 1;
  min-width: 0;
  display: flex;
  flex-direction: column;
  gap: 5px;
}

.chart-row {
  flex: 1;
  min-height: 0;
  display: flex;
  gap: 5px;
  align-items: flex-start;
}

.chart-panel {
  position: relative;
  flex: 1;
  min-width: 0;
  height: 100%;
  display: flex;
  flex-direction: column;
  padding: 0 6px 0 5px;
  border-radius: 3px;
  background: #505050;
}

.chart-head {
  height: 22px;
  flex: none;
  display: flex;
  align-items: center;
  margin-right: -3px;
}

.chart-head .grip {
  width: 3px;
  height: 14px;
}

.swatch {
  width: 12px;
  height: 12px;
  margin: 0 8px 0 6px;
  background: linear-gradient(135deg, #fff 42%, #d00 42%, #d00 58%, #fff 58%);
}

.swatch.corner::after {
  right: -3px;
  bottom: -3px;
}

.chart-head .caret {
  margin: 0 3px 1px 0;
}

.chart-head .period {
  padding-left: 4px;
  border-left: 1px solid #6a6a6a;
  color: #ddd;
}

.chart-head .mini .icon {
  width: 10px;
  height: 10px;
}

.mini {
  padding: 0 2px;
  margin-left: 1px;
  color: #9a9a9a;
}

.chart-head .push {
  margin-left: auto;
}

.chart-body {
  position: relative;
  flex: 1;
  min-height: 0;
  border-radius: 4px;
  background: #000;
  overflow: hidden;
}

#chart {
  display: block;
  width: 100%;
  height: 100%;
  fill: #b4b4b4;
  font: 9px "DejaVu Sans Condensed", "DejaVu Sans", sans-serif;
  shape-rendering: crispEdges;
}

#chart g[transform],
#chart ellipse {
  shape-rendering: auto;
}

.pips,
.timer,
.timer-grip {
  fill: none;
  stroke: #b4b4b4;
}

.timer {
  fill: #000;
}

.timer-grip {
  stroke-dasharray: 1 1;
}

.pips-label {
  text-anchor: middle;
  font-size: 10px;
}

.timer-label {
  font-size: 10px;
}

#chart .tag {
  fill: #fff;
}

.axis-time {
  text-anchor: middle;
  font-size: 10px;
}

.axis-sub {
  font-size: 7px;
}

.quick {
  position: absolute;
  top: 5px;
  left: 468px;
  width: 147px;
  display: grid;
  grid-template-columns: 1fr 1fr;
  gap: 5px;
}

.quick button {
  height: 19px;
  display: flex;
  align-items: center;
  padding: 0 5px 1px 4px;
  border-radius: 3px;
  color: #c8c8c8;
}

.quick small {
  align-self: flex-end;
}

.quick .icon {
  width: 12px;
  height: 12px;
}

.buy {
  background: #006b30;
}

.sell {
  background: #ad3d19;
}

.buy .icon {
  margin-left: auto;
}

.sell .icon {
  margin-right: auto;
}

.depth {
  grid-column: 1 / -1;
  display: flex;
  gap: 2px;
}

.depth span {
  height: 5px;
  border-radius: 3px;
}

.depth-sell {
  flex: 86;
  background: #ad3d19;
}

.depth-buy {
  flex: 59;
  background: #006b30;
}

.chart-scroll {
  height: 19px;
  flex: none;
  display: flex;
  align-items: center;
  padding-bottom: 2px;
}

.chart-scroll .thumb {
  width: 123px;
  height: 7px;
  margin: 0 2px 0 auto;
  border-radius: 4px;
  background: #808080;
}

.chart-scroll .tri-right {
  border-left-color: #888;
}

.splitter-h {
  position: absolute;
  left: 50%;
  bottom: -7px;
  margin-left: -12px;
  color: #999;
  font-size: 10px;
  line-height: 10px;
}

.rail {
  width: 30px;
  flex: none;
  display: flex;
  flex-direction: column;
  align-items: center;
  padding: 5px 0;
  border-radius: 3px;
  background: #505050;
}

.rail button {
  width: 23px;
  height: 25px;
  flex: none;
  display: flex;
  align-items: center;
  justify-content: center;
  color: #d0d0d0;
  position: relative;
}

.rail .active {
  width: 19px;
  height: 19px;
  margin: 3px 0;
  border-radius: 3px;
  background: #292929;
  color: #fff;
}

.rail .end {
  height: 26px;
  border-bottom: 1px solid #6e6e6e;
}

.rail .mark::before {
  content: "";
  position: absolute;
  left: 3px;
  bottom: 3px;
  border: 1px solid transparent;
  border-left-color: #fff;
  border-bottom-color: #fff;
}

.color {
  width: 12px;
  height: 12px;
  border: 1px solid #c9a9dd;
  background: #ab87c4;
}

/* Positions panel */
.trade-watch {
  height: 326px;
  flex: none;
  display: flex;
  flex-direction: column;
}

.tw-tabs {
  height: 26px;
  flex: none;
  display: flex;
  gap: 5px;
}

.tw-tabs button {
  min-width: 50px;
  display: flex;
  align-items: center;
  padding: 0 6px 0 5px;
  border-radius: 3px 3px 0 0;
  background: #3c3c3c;
  color: #c8c8c8;
}

.tw-tabs .active {
  background: #505050;
  color: #fff;
}

.tw-tabs .grip {
  width: 3px;
  height: 12px;
  margin-right: 5px;
}

.badge {
  width: 16px;
  height: 16px;
  margin-left: 5px;
  border-radius: 3px;
  background: #009346;
  color: #fff;
  line-height: 17px;
}

.badge.gray {
  background: #808080;
}

.feedback {
  height: 21px;
  display: flex;
  align-items: center;
  gap: 3px;
  margin-left: auto;
  padding: 0 4px;
  border-radius: 3px;
  background: #3c3c3c;
  color: #c8c8c8;
}

.feedback svg {
  width: 14px;
  height: 12px;
}

.tw-panel {
  flex: 1;
  min-height: 0;
  display: flex;
  flex-direction: column;
  padding: 0 5px;
  border: 1px solid #666;
  border-radius: 0 3px 3px 3px;
  background: #505050;
}

.filters {
  height: 30px;
  flex: none;
  display: flex;
  align-items: center;
  gap: 5px;
}

.filters .search-box,
.select select {
  background: #292929;
}

.filters .search-box {
  width: 180px;
}

.select {
  position: relative;
  width: 115px;
}

.select::after {
  content: "";
  position: absolute;
  right: 5px;
  top: 7px;
  border: 3px solid transparent;
  border-top: 5px solid #999;
  border-bottom: 0;
  pointer-events: none;
}

.select select {
  appearance: none;
  display: block;
  width: 100%;
  height: 19px;
  padding: 0 5px;
  border-radius: 3px;
}

.green {
  height: 19px;
  display: flex;
  align-items: center;
  border-radius: 3px;
  background: #009346;
}

.callout-bottom {
  margin: 0 3px 0 auto;
}

.callout-bottom::before {
  inset: -9px -6px;
}

.new-order {
  gap: 6px;
  padding: 0 6px 0 7px;
}

.close-all {
  display: flex;
  gap: 1px;
}

.close-all .green {
  gap: 9px;
  padding: 0 7px 0 6px;
  border-radius: 3px 0 0 3px;
}

.close-all .drop {
  width: 17px;
  padding: 0 5px;
  border-radius: 0 3px 3px 0;
}

.drop::before {
  content: "";
  border: 4px solid transparent;
  border-top: 6px solid #fff;
  border-bottom: 0;
}

.positions {
  flex: 1;
  min-height: 0;
  border-radius: 3px;
  background: #292929;
}

.positions table {
  table-layout: fixed;
  border-collapse: separate;
  border-spacing: 0;
  text-align: center;
}

.positions tr {
  height: 25px;
}

.positions thead tr {
  height: 24px;
}

.positions td:not(:first-child),
.positions th {
  padding-left: 5px;
}

.c-tools {
  width: 76px;
}

.c-symbol {
  width: 105px;
}

.c-qty,
.c-dir {
  width: 94px;
}

.c-entry {
  width: 132px;
}

.c-tp,
.c-sl {
  width: 107px;
}

.c-created {
  width: 201px;
}

.c-net {
  width: 133px;
}

.c-actions {
  width: 84px;
}

.positions th {
  color: #b8b8b8;
}

.positions th span {
  display: block;
  line-height: 17px;
  border-right: 1px solid #454545;
}

.positions tbody tr:first-child td:not(:first-child):not(:last-child) {
  border-bottom: 1px solid #454545;
}

.row-tools,
.row-actions {
  display: flex;
  gap: 4px;
  padding-left: 5px;
}

.row-actions {
  gap: 5px;
}

.row-tools button,
.row-actions button {
  width: 19px;
  height: 19px;
  display: flex;
  align-items: center;
  justify-content: center;
  border-radius: 3px;
  background: #4b4b4b;
  color: #c8c8c8;
}

.row-actions button {
  background: #009346;
  color: #fff;
}

.row-actions.orange button {
  background: #f15a24;
}

.row-tools .info,
.hint {
  font: italic bold 12px/14px "Liberation Serif", serif;
}

.summary {
  height: 29px;
  flex: none;
  display: flex;
  align-items: center;
  margin-left: -5px;
}

.summary span {
  flex: 1;
  line-height: 19px;
  text-align: center;
  border-right: 1px solid #6a6a6a;
  color: #c8c8c8;
}

.summary span:nth-child(7) {
  border: 0;
}

.summary b {
  font-weight: normal;
}

.summary b:not(.up) {
  color: #fff;
}

.summary button {
  color: #d0d0d0;
  padding-right: 2px;
}

/* Symbol panel */
.symbol-panel {
  position: relative;
  width: 380px;
  flex: none;
  display: flex;
  flex-direction: column;
  min-height: 0;
}

.splitter-v {
  position: absolute;
  left: -5px;
  top: 461px;
  width: 4px;
  display: grid;
  gap: 5px;
}

.splitter-v i {
  height: 5px;
  border: 1px solid #999;
  border-width: 0 1px;
}

.splitter-v b {
  width: 0;
  border: 3px solid transparent;
  border-left: 3px solid #999;
  border-right: 0;
}

.sp-tabs {
  height: 26px;
  flex: none;
  display: flex;
  gap: 5px;
}

.sp-tabs button {
  min-width: 50px;
  padding: 0 6px;
  border-radius: 3px 3px 0 0;
  background: #3c3c3c;
}

.sp-tabs .active {
  background: #505050;
}

.sp-body {
  flex: 1;
  min-height: 0;
  display: flex;
  flex-direction: column;
  gap: 5px;
  padding: 5px;
  border-radius: 0 3px 3px 3px;
  background: #505050;
}

.sp-head {
  display: flex;
  justify-content: space-between;
}

.sp-head .select {
  width: 163px;
}

.sp-scroll {
  flex: 1;
  min-height: 0;
  display: flex;
}

.cards {
  flex: 1;
  min-width: 0;
  overflow: hidden;
  display: flex;
  flex-direction: column;
  gap: 5px;
  padding: 5px;
  border-radius: 3px 3px 0 0;
  background: #292929;
}

.card {
  flex: none;
  border-radius: 3px;
  background: #3c3c3c;
}

.card.open {
  padding: 0 5px 5px;
}

.card h2 {
  height: 28px;
  display: flex;
  align-items: center;
  gap: 7px;
  margin: 0;
  padding: 0 5px;
  font-size: 11px;
  font-weight: normal;
  color: #c8c8c8;
}

.card.open h2 {
  height: 29px;
  padding: 0;
}

.card .grip {
  width: 3px;
}

.card .square {
  margin-left: auto;
}

.card-body {
  border-radius: 3px;
  background: #292929;
}

.hours {
  padding: 2px 6px;
}

.hours table {
  table-layout: fixed;
  color: #7c7c7c;
}

.hours td {
  width: 28px;
  height: 21px;
  padding-left: 3px;
  border-bottom: 1px solid #454545;
}

.hours tr:last-child td {
  border: 0;
}

.hours td:nth-child(2) {
  width: 48px;
}

.hours td:nth-child(3) {
  width: 10px;
}

.hours td:nth-child(5) {
  width: 47px;
}

.hours td:nth-child(6) {
  width: auto;
}

.hours small {
  font-size: 10px;
}

.hours .dot {
  float: right;
  margin: 4px 8px;
}

.now {
  color: #fff;
  font-weight: bold;
}

.info-list {
  padding: 0 5px;
}

.info-list tr {
  height: 23px;
}

.info-list tr:not(:last-child) {
  border-bottom: 1px solid #505050;
}

.info-list th {
  text-align: left;
  color: #c8c8c8;
}

.info-list td {
  text-align: right;
}

.hint {
  width: 15px;
  height: 15px;
  margin-left: 7px;
  border: 1px solid #c8c8c8;
  border-radius: 3px;
  font-size: 10px;
  line-height: 10px;
}

.inverted {
  display: grid;
  grid-template-columns: 138px 84px 84px;
  padding: 4px 0 20px;
  text-align: center;
  color: #8c8c8c;
}

.scrollbar {
  width: 13px;
  display: flex;
  flex-direction: column;
  align-items: center;
  gap: 6px;
  padding: 5px 0 5px 4px;
}

.scrollbar .thumb {
  width: 7px;
  height: 790px;
  border-radius: 4px;
  background: #808080;
}

.scrollbar .tri-down {
  margin-top: auto;
  border-width: 6px 4px 0;
  border-top-color: #888;
}

/* Status bar */
.status {
  height: 22px;
  flex: none;
  display: flex;
  align-items: center;
  padding: 0 4px 0 10px;
  gap: 5px;
}

.clock {
  margin-left: auto;
}

.clock span {
  margin-left: 2px;
}

.zone {
  padding-left: 4px;
}

.zone .caret {
  margin: 0 4px 1px 5px;
  border-top-color: #777;
}

.ping {
  padding-left: 5px;
  border-left: 1px solid #6aa8dc;
}
```

FILE: chart.js
```js
// Candles: [high, bodyTop, bodyBottom, low, isUp], one every 8px
const candles = [
  [277,277,292,292,1],[266,278,303,305,0],[196,241,303,308,1],[199,218,239,253,1],[124,170,219,225,1],[130,172,206,209,0],
  [166,205,206,216,0],[151,159,207,211,1],[155,159,169,183,0],[150,160,169,178,1],[158,161,208,232,0],[193,198,209,223,1],
  [200,210,225,229,1],[174,196,208,208,1],[177,195,202,210,0],[195,202,208,235,0],[193,195,208,220,1],[189,196,199,215,0],
  [196,198,211,219,0],[187,190,210,218,1],[179,191,208,222,0],[190,207,255,260,0],[239,252,253,287,1],[218,241,252,259,1],
  [209,223,240,252,1],[194,209,224,234,1],[175,208,209,224,1],[190,207,277,287,0],[195,206,277,294,1],[173,207,256,271,0],
  [221,255,270,271,0],[261,269,284,307,0],[270,284,302,312,0],[290,296,302,317,1],[284,288,298,304,1],[270,273,289,303,1],
  [286,306,333,347,1],[269,272,298,304,1],[265,272,277,284,0],[243,259,278,283,1],[256,258,290,300,0],[277,287,290,294,1],
  [281,287,304,308,0],[286,294,305,309,1],[288,294,329,337,0],[321,328,336,354,0],[311,326,333,343,1],[319,326,346,366,0],
  [325,329,346,348,1],[311,318,330,342,1],[317,318,339,345,0],[279,283,339,340,1],[280,284,307,307,0],[298,304,328,341,0],
  [306,314,328,329,1],[309,314,336,344,0],[331,335,342,349,0],[332,334,342,345,1],[330,331,335,339,1],[327,332,337,339,0],
  [325,331,353,353,1],[315,320,328,333,1],[311,320,325,336,0],[315,324,366,372,0],[358,365,368,387,0],[345,350,366,394,1],
  [321,331,349,370,1],[320,329,338,366,0],[325,338,349,364,0],[320,349,356,364,0],[346,356,414,417,0],[362,409,413,432,1],
  [388,409,414,446,0],[403,415,422,451,0],[401,421,487,492,0],[475,487,531,568,0],[498,528,546,589,0],[545,545,588,625,0],
  [485,499,589,615,1],[471,489,501,511,1],[464,488,497,502,0],[481,497,498,500,1],[483,496,506,509,0],[495,505,530,543,0],
  [510,516,544,558,1],[485,511,519,522,1],[469,483,513,516,1],[454,483,489,493,0],[483,489,498,511,0],[488,493,498,511,1],
  [476,479,494,497,1],[446,467,480,482,1],[464,468,474,497,0],[433,458,475,485,1],[386,409,460,461,1],[361,370,410,410,1],
  [346,350,371,382,1],[343,350,382,386,0],[349,351,381,398,1],[343,350,351,380,0],[351,351,409,422,0],[387,410,413,429,0],
  [366,379,413,414,1],[363,379,388,393,0],[366,386,392,395,0],[376,385,392,401,1],[367,369,387,391,1],[363,369,385,388,0],
  [388,391,422,422,1],[376,378,388,392,1],[371,378,384,386,0],[355,368,383,386,1],[355,360,370,374,1],[358,360,366,374,0],
  [362,364,379,379,0],[372,376,380,384,1],[372,377,378,390,0],[355,366,379,384,1],[360,366,375,391,0],[332,339,374,380,1],
  [335,340,359,378,0],[338,343,360,368,1]
];

const times = {
  420: '25 Nov 16:00', 548: '26 Nov 08:00', 676: '27 Nov 00:00', 804: '27 Nov 16:00',
  932: '28 Nov 08:00', 1060: '1 Dec 00:00', 1188: '1 Dec 16:00', 1316: '2 Dec 08:00'
};

const AXIS_X = 1442;
const AXIS_Y = 642;
const UP = '#00853e';
const DOWN = '#f15a24';
const plot = document.getElementById('plot');

function rect(x, y, w, h, fill) {
  return `<rect x="${x}" y="${y}" width="${w}" height="${h}" fill="${fill}"/>`;
}

let out = '';

// Horizontal grid and price labels
for (let i = 0; i < 18; i++) {
  const y = Math.round(106 + i * 30.15);
  const price = (1.634 - i * 0.001).toFixed(4);
  out += rect(389, y, AXIS_X - 389, 1, '#1c1c20');
  out += rect(AXIS_X, y + 1, 3, 1, '#888');
  out += `<text x="1446" y="${y + 5}">${price}<tspan class="axis-sub" dy="1">0</tspan></text>`;
}

// Vertical grid, day separators are brighter
for (let x = 420; x < AXIS_X; x += 64) {
  out += rect(x, 84, 1, AXIS_Y - 84, (x - 484) % 192 === 0 ? '#5a5a5a' : '#1c1c20');
}

candles.forEach(([high, top, bottom, low, isUp], i) => {
  const x = 388 + i * 8;
  const color = isUp ? UP : DOWN;
  out += rect(x, high, 1, low - high, color);
  out += rect(x - 2, top, 5, bottom - top, color);
});

// Ask and bid lines
out += rect(389, 339, AXIS_X - 389, 1, UP);
out += rect(389, 342, AXIS_X - 389, 1, DOWN);

// Axes
out += rect(AXIS_X, 84, 1, AXIS_Y - 84, '#b4b4b4');
out += rect(389, AXIS_Y, AXIS_X - 388, 1, '#b4b4b4');
for (const x in times) {
  out += rect(x, AXIS_Y, 2, 4, '#b4b4b4');
  out += `<text class="axis-time" x="${Number(x) + 1}" y="655">${times[x]}</text>`;
}

plot.innerHTML = out;
```
